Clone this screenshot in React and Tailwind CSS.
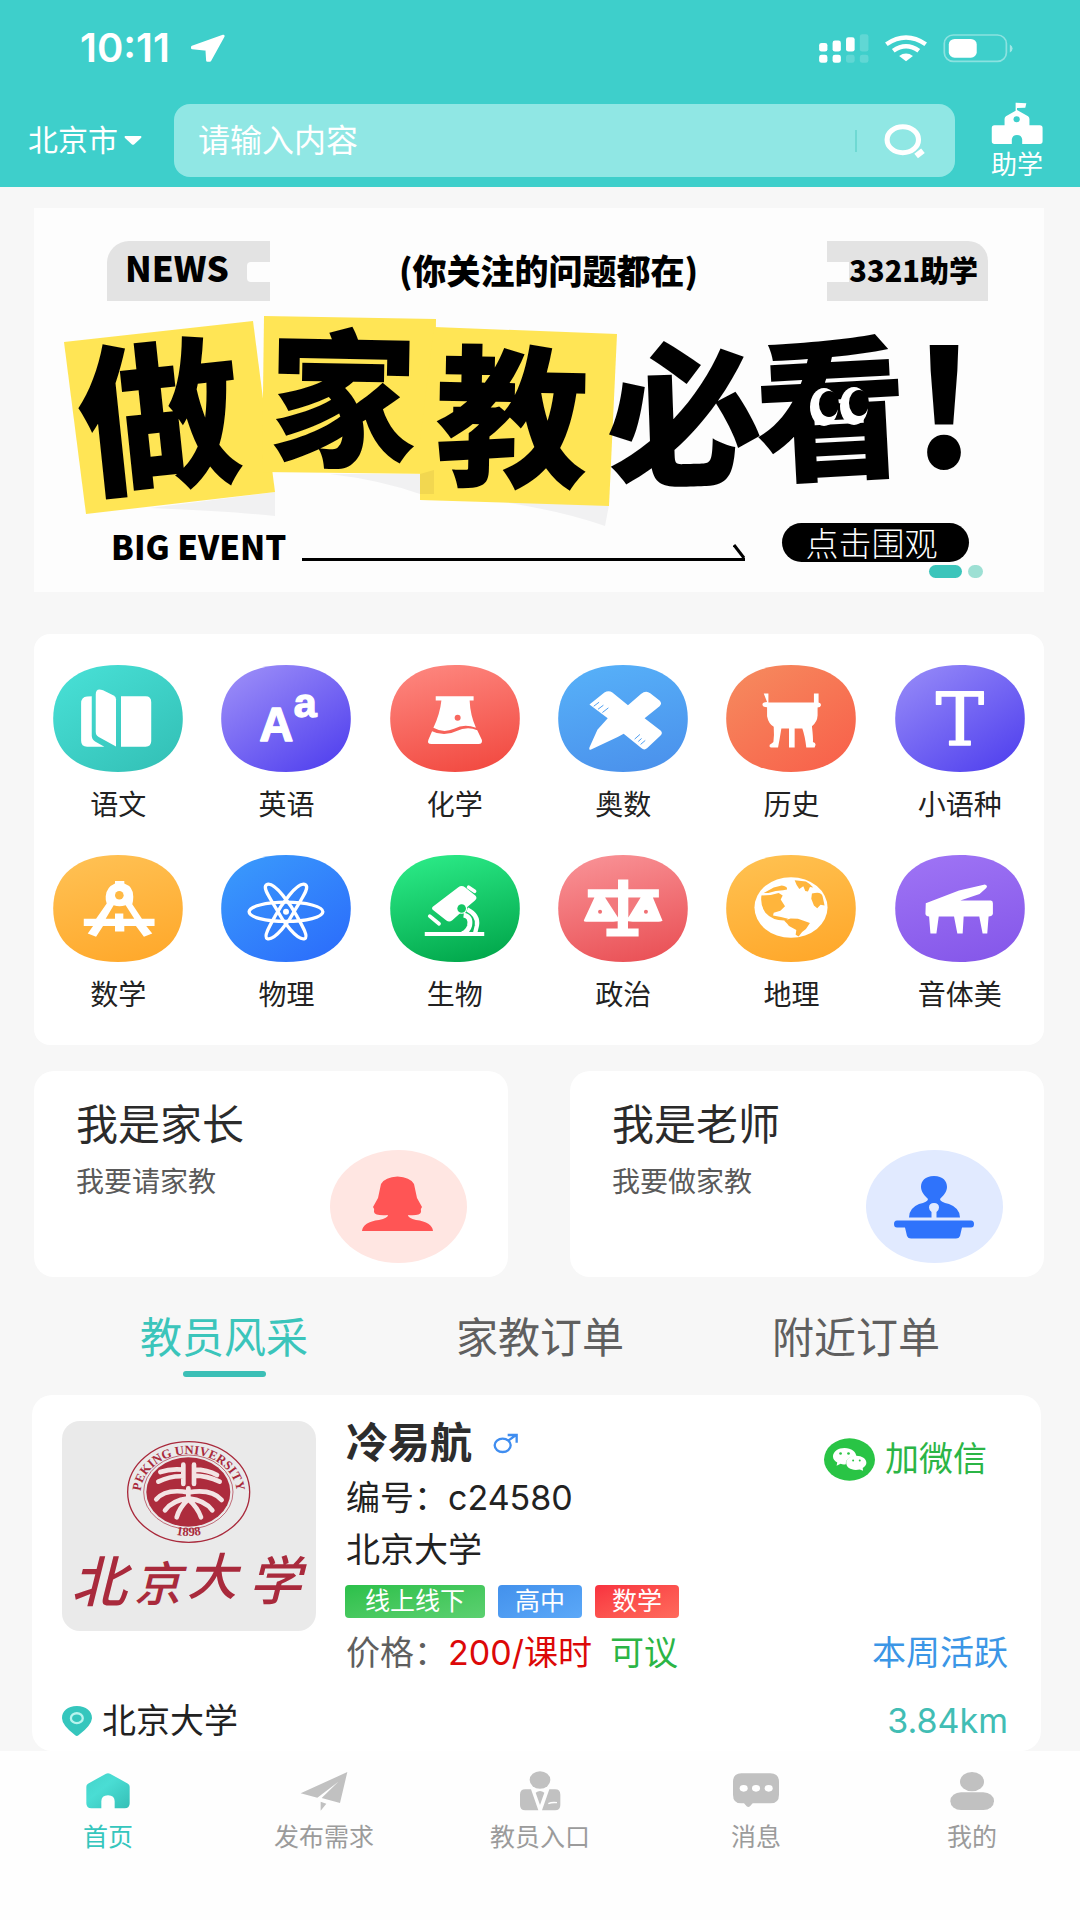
import React from "react";

const BLOB =
  "M195 0C320 0 390 62 390 161C390 260 320 322 195 322C70 322 0 260 0 161C0 62 70 0 195 0Z";

const SUBJECTS = [
  {
    name: "语文", x: 70, y: 74, from: "#48e0d6", to: "#33c0b6", dir: "d",
    art: (
      <g fill="#fff">
        <path d="M186 168v118q0 12 10 18l28 16h-52q-18 0-18-18V190q0-20 18-21z" />
        <path d="M198 163q0-22 22-13l32 16q7 4 7 11v142l-52-28q-9-5-9-15z" />
        <path d="M274 168h74q17 0 17 17v118q0 17-17 17h-74z" />
      </g>
    ),
  },
  {
    name: "英语", x: 576, y: 74, from: "#9d8ff8", to: "#4f3eee", dir: "d",
    art: (
      <g fill="#fff" stroke="#fff" strokeWidth="4" strokeLinejoin="round" fontFamily="Liberation Sans" fontWeight="700">
        <text x="742" y="303" fontSize="142" textAnchor="middle">A</text>
        <text x="829" y="232" fontSize="124" textAnchor="middle">a</text>
      </g>
    ),
  },
  {
    name: "化学", x: 1082, y: 74, from: "#fd847c", to: "#f24b42", dir: "v",
    art: (
      <g fill="#fff">
        <path d="M1219 168h114v13h-12q2 45 19 82q-35-14-66 3q-32 14-62-3q20-42 24-82h-17z" />
        <path d="M1208 273q36 18 72 0q34-16 64-3l14 30q2 12-10 12h-142q-14 0-9-13z" />
        <circle cx="1285" cy="233" r="9" fill="#f8685f" />
      </g>
    ),
  },
  {
    name: "奥数", x: 56, y: 76, from: "#56aff8", to: "#4b92ec", dir: "v",
    art: (
      <g>
        <path fill="#fff" d="M150 195l45-36q13-8 24 0l47 38l39-34q15-12 28-2l28 22q9 9 0 17l-45 36l48 37q8 7 0 15l-40 38q-9 8-18 0l-53-43l-18 10l-80 37q-8 3-5-6l24-53l31-35z" />
        <path stroke="#4f9ff0" strokeWidth="3" fill="none" d="M163 200l16-12M176 209l16-12M189 219l18-14M286 299l16-14M297 306l10-9M304 315l14-12" />
      </g>
    ),
  },
  {
    name: "历史", x: 560, y: 76, from: "#f68a5e", to: "#f8604a", dir: "d",
    art: (
      <path fill="#fff" d="M673 162h14v27h137v-27h14v27q8 2 7 9q-1 6-10 6v24q-1 20-17 32q4 35 3 48q8 2 8 8l-3 8h-25q-4-35-12-57h-23v57h-17v-57h-23q-5 32-10 57h-22q-6-2-3-8q8-4 11-8q3-20 1-46q-16-10-20-32v-27q-14 0-14-8q0-7 14-8z" />
    ),
  },
  {
    name: "小语种", x: 1066, y: 76, from: "#968af8", to: "#4f3fee", dir: "d",
    art: (
      <text x="1261" y="317" fill="#fff" stroke="#fff" strokeWidth="4" strokeLinejoin="round" fontFamily="DejaVu Serif" fontSize="218" textAnchor="middle">T</text>
    ),
  },
  {
    name: "数学", x: 70, y: 642, from: "#ffc052", to: "#ffa92c", dir: "v",
    art: (
      <g>
        <path fill="#fff" d="M256 720h28v8q28 10 27 40q0 12-3 22l29 44h38v22h-25l18 22l-25 10l-24-32h-35v16h-28v-16h-36l-21 32l-25-10l16-22h-28v-22h37l32-46q-4-10-3-22q2-27 28-38z" />
        <circle cx="269" cy="763" r="13" fill="#ffb944" />
        <path fill="#ffb33c" d="M252 793q17 6 36 0l26 41h-33v-16h-25v16h-28z" />
      </g>
    ),
  },
  {
    name: "物理", x: 576, y: 642, from: "#3a9afc", to: "#2b6cfb", dir: "d",
    art: (
      <g fill="none" stroke="#fff" strokeWidth="10">
        <ellipse cx="771" cy="813" rx="111" ry="29" />
        <path d="M712 732C735 716 790 800 805 828C822 858 838 888 828 893C806 903 760 840 743 806C722 770 700 741 712 732Z" />
        <path d="M830 732C807 716 752 800 737 828C720 858 704 888 714 893C736 903 782 840 799 806C820 770 842 741 830 732Z" />
        <circle cx="771" cy="813" r="9" fill="#fff" stroke="none" />
      </g>
    ),
  },
  {
    name: "生物", x: 1082, y: 642, from: "#2ae885", to: "#02a84c", dir: "v",
    art: (
      <g>
        <path fill="#fff" d="M1212 796l75-57q10-7 20 0l32 26q6 8-2 14l-33 28l-35 31q-9 7-18 1l-41-32q-5-6 2-11z" />
        <path stroke="#fff" strokeWidth="11" strokeLinecap="round" d="M1318 739l18 12M1201 826l28 23" />
        <path fill="none" stroke="#fff" strokeWidth="15" d="M1303 823q23 3 18 31q-4 17-22 25" />
        <path fill="none" stroke="#fff" strokeWidth="13" d="M1314 806q34 17 29 48l-6 25" />
        <circle cx="1297" cy="802" r="17" fill="#fff" />
        <circle cx="1297" cy="803" r="13" fill="#14c764" />
        <path fill="#fff" d="M1186 874h179v12h-179z" />
      </g>
    ),
  },
  {
    name: "政治", x: 56, y: 646, from: "#f88f93", to: "#ea5257", dir: "v",
    art: (
      <g>
        <path fill="#fff" d="M236 720h31v29h92v25h-18l29 70q-5 3-12 3h-78l-14-2v22h32v24h-97v-24h34v-22l-13 2h-82q-7 0-7-4l32-69h-20v-25h91z" />
        <path fill="#f2797d" d="M197 774h39v60zM304 774h-37v60z" />
        <circle cx="182" cy="817" r="6" fill="#f07074" />
        <circle cx="320" cy="817" r="6" fill="#f07074" />
      </g>
    ),
  },
  {
    name: "地理", x: 560, y: 646, from: "#ffc04f", to: "#ffa82b", dir: "v",
    art: (
      <g>
        <ellipse cx="755" cy="804" rx="110" ry="91" fill="#fff" />
        <path fill="#ffb53c" d="M666 768l28-2l24-6l12 8l-6 12l13 20l-14 14l-20 6l-2 8q25 4 45 10l-6 5q-40 2-62-23q-16-22-12-52zM673 760l30-16l24-6q18 2 16 12l-12 2l-22 2l-22 6z" />
        <path fill="#ffb53c" d="M766 722l34 4q14 8 22 18l-10-2l-6 14l-8-2l-6-14l-12 8l-8-12zM818 762q28-8 32 8l6 28l-12-2l-10 10l-10-8l-8-20z" />
        <path fill="#ffb038" d="M734 843l20-6l22 1l36 13l-12 18q-16 10-22 22l-9-5l2-14l-22-12l-6-8z" />
      </g>
    ),
  },
  {
    name: "音体美", x: 1066, y: 646, from: "#9d72f4", to: "#8658ea", dir: "v",
    art: (
      <path fill="#fff" d="M1158 791l100-38l78-18q10 4 4 10l-20 18l-58 20h92q6 0 6 8v32q-2 8-13 8l-4 51h-14l-10-51h-47l-3 51h-16l-10-51h-46l-7 51h-18l-4-51q-10 0-11-8z" />
    ),
  },
];

function SubjectIcon({ s, id }) {
  return (
    <svg className="h-[107px] w-[130px]" viewBox={`${s.x} ${s.y} 390 322`} aria-hidden="true">
      <defs>
        <linearGradient id={id} x1={s.dir === "d" ? "0.1" : "0.35"} y1="0" x2={s.dir === "d" ? "0.9" : "0.65"} y2="1">
          <stop offset="0" stopColor={s.from} />
          <stop offset="1" stopColor={s.to} />
        </linearGradient>
      </defs>
      <path d={BLOB} transform={`translate(${s.x} ${s.y})`} fill={`url(#${id})`} />
      {s.art}
    </svg>
  );
}

function StatusBar() {
  return (
    <div className="flex h-24 items-center justify-between pr-[65px] pl-20">
      <div className="flex items-center gap-5">
        <span className="text-[40px] leading-10 font-semibold">10:11</span>
        <svg className="h-[30px] w-9" viewBox="555 100 105 90" preserveAspectRatio="none" aria-hidden="true">
          <path fill="#fff" stroke="#fff" strokeWidth="8" strokeLinejoin="round" d="M562 142L652 109L613 182L606 182L604 149L562 145Z" />
        </svg>
      </div>
      <svg className="h-[33px] w-[200px]" viewBox="800 95 580 100" preserveAspectRatio="none" aria-hidden="true">
        <g fill="#fff">
          <rect x="812" y="128" width="24" height="26" rx="7" />
          <rect x="851" y="121" width="24" height="33" rx="7" />
          <rect x="890" y="111" width="25" height="43" rx="7" />
          <rect x="812" y="164" width="24" height="24" rx="7" />
          <rect x="851" y="164" width="24" height="24" rx="7" />
          <rect x="930" y="102" width="25" height="52" rx="7" opacity=".18" />
          <rect x="890" y="164" width="25" height="24" rx="7" opacity=".18" />
          <rect x="930" y="164" width="25" height="24" rx="7" opacity=".18" />
          <path d="M1044 168q20-15 40 0l-20 16z" />
        </g>
        <g fill="none" stroke="#fff" strokeWidth="13">
          <path d="M1007 132q57-41 114 0" />
          <path d="M1027 152q37-28 74 0" />
        </g>
        <rect x="1175" y="104" width="180" height="80" rx="26" fill="none" stroke="#fff" strokeOpacity=".4" strokeWidth="5" />
        <rect x="1188" y="116" width="81" height="57" rx="17" fill="#fff" />
        <path d="M1365 133q8 4 8 12t-8 12z" fill="#fff" opacity=".5" />
      </svg>
    </div>
  );
}

function Header() {
  return (
    <header className="bg-[#3ecfcb] text-white">
      <StatusBar />
      <div className="flex h-[91px] items-start pr-[35px] pl-7">
        <button type="button" className="mt-6 flex items-center gap-[6px] text-[30px] leading-10" aria-haspopup="listbox">
          北京市
          <svg className="h-[9px] w-[18px]" viewBox="0 0 18 9" aria-hidden="true">
            <path fill="#fff" d="M1 0h16q1 1 0 2L10 8.500q-1 .5-2 0L1 2q-1-1 0-2z" />
          </svg>
        </button>
        <form className="mt-2 ml-8 flex h-[73px] flex-1 items-center rounded-2xl bg-[#90e7e4] pr-[30px] pl-6" role="search" onSubmit={(e) => e.preventDefault()}>
          <input type="search" aria-label="搜索" placeholder="请输入内容" className="min-w-0 flex-1 bg-transparent text-[32px] leading-10 text-white outline-none placeholder:text-white placeholder:opacity-100" />
          <span className="mr-[26px] h-[22px] w-[2px] bg-[#6fd9d3]" />
          <button type="submit" aria-label="搜索">
            <svg className="h-9 w-[42px]" viewBox="995 368 123 108" preserveAspectRatio="none" aria-hidden="true">
              <ellipse cx="1053" cy="418" rx="46" ry="39" fill="none" stroke="#fff" strokeWidth="15" />
              <path stroke="#fff" strokeWidth="17" d="M1092 467l20-16" />
            </svg>
          </button>
        </form>
        <button type="button" className="mt-1 ml-[34px] flex flex-col items-center gap-1 text-[26px] leading-8">
          <svg className="h-[45px] w-14" viewBox="1305 300 162 135" preserveAspectRatio="none" aria-hidden="true">
            <path fill="#fff" d="M1382 308l31 2l-3 13l-24 1v6l32 19q4 3 4 8v19h30q8 0 8 8v40q0 8-8 8h-51v-14q-2-13-15-13t-15 13v14h-50q-8 0-8-8v-40q0-8 8-8h29v-19q0-5 4-8l28-17z" />
            <circle cx="1385" cy="358" r="9" fill="#3ecfcb" />
          </svg>
          助学
        </button>
      </div>
    </header>
  );
}

function Banner() {
  return (
    <section className="mt-[21px] mr-9 ml-[34px] flex flex-col bg-[#fdfdfd] pt-[33px] pb-[14px] font-['Noto_Sans_CJK_SC',sans-serif] text-black" aria-label="做家教必看">
      <div className="flex items-start justify-between pr-14 pl-[73px] font-black">
        <div className="relative h-[60px] w-[163px] rounded-tl-[22px] bg-[#e3e3e3] pl-[18px] text-[35px] leading-[52px]">
          NEWS
          <span className="absolute top-[21px] right-0 h-5 w-[23px] rounded-l bg-[#fdfdfd]" />
        </div>
        <p className="text-[34px] leading-[58px]">(你关注的问题都在)</p>
        <div className="relative h-[60px] w-[161px] rounded-tr-[20px] bg-[#e3e3e3] pr-[10px] text-right text-[29px] leading-[56px]">
          <span className="absolute top-[21px] left-0 h-5 w-[22px] bg-[#fdfdfd]" />
          <span className="relative">3321助学</span>
        </div>
      </div>
      <svg className="mt-[7px] w-full" viewBox="34 308 1010 215" overflow="visible" role="img" aria-label="做家教必看！">
        <g fill="#f1f1f2">
          <path d="M150 508L275 492V516Q240 512 150 508Z" />
          <path d="M330 474H420V494Q380 480 330 474Z" />
          <path d="M490 500L609 505L605 526Q560 510 490 500Z" />
        </g>
        <g fill="#ffe555">
          <path d="M64 342L253 321L275 492L86 514Z" />
          <path d="M264 316L436 319L434 474L262 472Z" />
          <path d="M434 327L617 334L609 506L420 500V440Z" />
        </g>
        <path d="M420 474L434 470V494H420Z" fill="#f2d750" />
        <g fontFamily="Noto Sans CJK SC" fontWeight="900" textAnchor="middle" fill="#000">
          <text x="160" y="478" fontSize="163" transform="rotate(-6 160 418)">做</text>
          <text x="343" y="455" fontSize="148" transform="rotate(1 343 399)">家</text>
          <text x="512" y="475" fontSize="153" transform="rotate(1 512 418)">教</text>
          <text x="684" y="474" fontSize="156" transform="rotate(-2 684 416)">必</text>
          <text x="831" y="467" fontSize="153" transform="rotate(-3 831 409)">看</text>
          <text x="944" y="468" fontSize="160">!</text>
        </g>
        <ellipse cx="824" cy="407" rx="14" ry="19" fill="#fff" />
        <ellipse cx="829" cy="404" rx="10" ry="13" fill="#000" />
        <ellipse cx="854" cy="406" rx="14" ry="19" fill="#fff" />
        <ellipse cx="859" cy="403" rx="10" ry="13" fill="#000" />
      </svg>
      <div className="flex h-[39px] items-center pr-[75px] pl-[77px]">
        <span className="pt-2 text-[33px] leading-[39px] font-extrabold">BIG EVENT</span>
        <div className="mt-[18px] mr-[37px] ml-4 flex h-[18px] flex-1 items-end justify-end border-b-[3px] border-black">
          <svg className="h-[14px] w-3" viewBox="0 0 12 14" aria-hidden="true">
            <path d="M1 1l10 13" stroke="#000" strokeWidth="3" />
          </svg>
        </div>
        <button type="button" className="h-[39px] w-[187px] rounded-full bg-black pr-2 text-center text-[33px] leading-[37px] font-light text-white">点击围观</button>
      </div>
      <div className="mt-[3px] flex justify-end gap-[6px] pr-[61px]">
        <span className="h-[13px] w-[33px] rounded-full bg-[#3bc5bb]" />
        <span className="h-[13px] w-[15px] rounded-full bg-[#9de0d4]" />
      </div>
    </section>
  );
}

function RoleCard({ title, sub, children }) {
  return (
    <a href="#role" className="relative block h-[206px] rounded-[20px] bg-white px-[42px] pt-[30px]">
      <h2 className="text-[42px] leading-[48px] text-[#2b2b2b]">{title}</h2>
      <p className="mt-[15px] text-[28px] leading-9 text-[#5a5a5a]">{sub}</p>
      <div className="absolute right-[41px] bottom-[14px]">{children}</div>
    </a>
  );
}

function Roles() {
  return (
    <section className="mt-[26px] mr-9 ml-[34px] grid grid-cols-2 gap-[62px]">
      <RoleCard title="我是家长" sub="我要请家教">
        <svg className="h-[113px] w-[137px]" viewBox="331 1149 137 113" aria-hidden="true">
          <ellipse cx="399.500" cy="1205.500" rx="68.500" ry="56.500" fill="#ffe6e2" />
          <path fill="#ff5555" d="M398.500 1175.500Q411 1176 415 1183L418 1197L423 1206Q421 1208 422 1211Q421 1215 409 1214Q409 1217 417 1219Q433 1221 434 1230H363Q364 1221 380 1219Q389 1217 389 1214Q376 1215 375 1211Q376 1208 374 1206L379 1197L382 1183Q386 1176 398.500 1175.500Z" />
        </svg>
      </RoleCard>
      <RoleCard title="我是老师" sub="我要做家教">
        <svg className="h-[113px] w-[137px]" viewBox="866 1149 137 113" aria-hidden="true">
          <ellipse cx="934.500" cy="1205.500" rx="68.500" ry="56.500" fill="#e1eaff" />
          <path fill="#2f73fb" d="M934 1175C943 1175 947 1180 947 1186C947 1191 943 1195 940 1198Q940 1201 949 1203Q960 1207 960 1216.500H909Q909 1207 919 1203Q928 1201 928 1198C925 1195 921 1191 921 1186C921 1180 925 1175 934 1175Z" />
          <path fill="#2f73fb" d="M897 1219.500H971Q974 1219.500 974 1223T971 1226.500H962L960 1235Q959 1237.500 956 1237.500H911Q908 1237.500 907 1235L905 1226.500H897Q894 1226.500 894 1223T897 1219.500Z" />
          <path fill="#e1eaff" d="M934 1202Q939 1202 939 1206.500Q939 1209 936.500 1211V1217H931.500V1211Q929 1209 929 1206.500Q929 1202 934 1202Z" />
        </svg>
      </RoleCard>
    </section>
  );
}

function Tabs() {
  return (
    <div className="grid h-[118px] grid-cols-3 px-[66px] text-[42px] text-[#5f5f5f]" role="tablist">
      {["教员风采", "家教订单", "附近订单"].map((t, i) => (
        <button key={t} type="button" role="tab" aria-selected={i === 0} className={i === 0 ? "flex flex-col items-center pt-9 leading-[50px] text-[#3bc5bb]" : "flex flex-col items-center pt-9 leading-[50px]"}>
          {t}
          {i === 0 && <span className="mt-2 h-[6px] w-[83px] rounded-full bg-[#3bbfb6]" />}
        </button>
      ))}
    </div>
  );
}

function SchoolLogo() {
  return (
    <svg className="h-[210px] w-[254px] shrink-0 rounded-[18px] bg-[#eaeaea]" viewBox="95 90 762 630" role="img" aria-label="北京大学">
      <defs>
        <path id="ring-top" d="M341 352A144 119 0 1 1 609 352" />
        <path id="ring-bottom" d="M370 400A157 137 0 0 0 580 400" />
      </defs>
      <g fill="none" stroke="#a92a3c">
        <ellipse cx="475" cy="303" rx="183" ry="151" strokeWidth="4" />
        <ellipse cx="474" cy="303" rx="134" ry="111" strokeWidth="2" />
      </g>
      <ellipse cx="474" cy="303" rx="126" ry="104" fill="#ad2c3d" />
      <g fill="#a92a3c" fontFamily="Liberation Serif" fontWeight="700" fontSize="38" textAnchor="middle">
        <text>
          <textPath href="#ring-top" startOffset="50%">PEKING UNIVERSITY</textPath>
        </text>
        <text>
          <textPath href="#ring-bottom" startOffset="50%">1898</textPath>
        </text>
      </g>
      <g fill="none" stroke="#f3e4e4" strokeWidth="14" strokeLinecap="round" strokeLinejoin="round">
        <path d="M459 221V279M390 243Q420 232 459 236M384 272Q420 254 459 256" />
        <path d="M491 221V279M491 236Q532 236 560 252M491 254Q530 254 568 272" />
        <path d="M474 292V322M378 325Q405 292 474 304Q545 292 574 327" />
        <path d="M404 358Q425 328 474 322Q525 328 546 358M439 379Q447 350 474 325Q502 350 512 379" />
      </g>
      <g fill="#a92a3c" fontFamily="Noto Sans CJK SC" fontWeight="500" fontStyle="italic" textAnchor="middle">
        <text x="206" y="632" fontSize="166">北</text>
        <text x="382" y="630" fontSize="142">京</text>
        <text x="545" y="612" fontSize="150">大</text>
        <text x="734" y="626" fontSize="158">学</text>
      </g>
    </svg>
  );
}

function TeacherCard() {
  return (
    <article className="mr-[39px] ml-8 rounded-[20px] bg-white pt-[26px] pr-[33px] pb-2 pl-[30px] text-[34px] leading-[44px] text-[#222]">
      <div className="flex">
        <SchoolLogo />
        <div className="ml-[30px] flex-1">
          <h3 className="flex items-center text-[42px] font-bold text-[#2d2d2d]">
            冷易航
            <svg className="ml-[21px] h-[21px] w-[26px]" viewBox="1392 124 78 63" role="img" aria-label="男">
              <g fill="none" stroke="#3f8df0" strokeWidth="7">
                <ellipse cx="1421" cy="161" rx="24" ry="20" />
                <path d="M1438 147L1461 130M1436 130H1463V153" />
              </g>
            </svg>
          </h3>
          <p className="mt-[11px]">编号：c24580</p>
          <p className="mt-2">北京大学</p>
          <ul className="mt-[13px] -ml-px flex gap-[13px] text-[25px] leading-[33px] text-white">
            <li className="rounded bg-linear-to-br from-[#2bc04a] to-[#5bd070] px-5">线上线下</li>
            <li className="rounded bg-linear-to-br from-[#4391ec] to-[#5ba8f8] px-[17px]">高中</li>
            <li className="rounded bg-linear-to-br from-[#f8313f] to-[#ff6a5c] px-[17px]">数学</li>
          </ul>
          <p className="mt-[13px]">
            <span className="text-[#5f5f5f]">价格：</span>
            <span className="text-[#dc0808]">200/课时</span>
            <span className="ml-[18px] text-[#2bb546]">可议</span>
          </p>
        </div>
        <div className="flex flex-col items-end justify-between">
          <button type="button" className="mt-4 mr-[21px] flex items-center gap-[10px] text-[#2bb546]">
            <svg className="h-[43px] w-[51px]" viewBox="849 138 154 130" aria-hidden="true">
              <ellipse cx="926" cy="203" rx="77" ry="64" fill="#29c445" />
              <path fill="#fff" d="M911 168C932 168 946 180 947 194C928 192 914 202 915 217Q907 219 899 216L887 222L889 212Q876 205 876 193C877 178 892 168 911 168Z" />
              <path fill="#fff" d="M946 192C964 192 977 201 977 213Q977 222 966 229L967 237L957 233C935 238 916 229 916 213C916 201 929 192 946 192Z" />
              <g fill="#29c445">
                <circle cx="899" cy="185" r="4" />
                <circle cx="923" cy="185" r="4" />
                <circle cx="937" cy="206" r="3" />
                <circle cx="957" cy="206" r="3" />
              </g>
            </svg>
            加微信
          </button>
          <span className="text-[#3b96e6]">本周活跃</span>
        </div>
      </div>
      <div className="mt-6 flex items-center">
        <svg className="h-[30px] w-[30px]" viewBox="95 942 91 91" aria-hidden="true">
          <path fill="#35c6bd" d="M140 942C168 942 186 957 186 979Q185 1000 145 1031Q140 1035 135 1031Q95 1000 95 979C95 957 112 942 140 942Z" />
          <ellipse cx="140" cy="979" rx="18" ry="15" fill="none" stroke="#b8f4ee" strokeWidth="7" />
        </svg>
        <span className="ml-[10px]">北京大学</span>
        <span className="ml-auto text-[#41bdb4]">3.84km</span>
      </div>
    </article>
  );
}

const NAV = [
  {
    label: "首页", box: "61 26 150 126",
    art: <path fill="url(#home-fill)" d="M130 37Q136 34 142 37L196 67Q201 70 201 76V126Q201 141 186 141H156V120Q156 102 136 102T116 120V141H86Q71 141 71 126V76Q71 70 76 67Z" />,
  },
  {
    label: "发布需求", box: "710 26 150 126",
    art: <path d="M855 32L833 125L778 110L828 61L765 109L715 96ZM775 121L792 127L775 148Z" />,
  },
  {
    label: "教员入口", box: "42 26 150 126",
    art: (
      <g>
        <ellipse cx="117" cy="56" rx="31" ry="26" />
        <path d="M73 84H90L112 147H73Q57 147 57 131V100Q57 84 73 84ZM145 84H162Q178 84 178 100V131Q178 147 162 147H123ZM104 94Q117 84 130 94L117 131Z" />
        <path d="M142 127Q152 122 168 124" stroke="#fff" strokeWidth="4" fill="none" />
      </g>
    ),
  },
  {
    label: "消息", box: "691 26 150 126",
    art: (
      <g>
        <path d="M722 36H809Q835 36 835 62V100Q835 126 809 126H756L748 135Q743 139 738 135L730 126H722Q697 126 697 100V62Q697 36 722 36Z" />
        <g fill="#fff">
          <ellipse cx="729" cy="81" rx="12" ry="10" />
          <ellipse cx="766" cy="81" rx="12" ry="10" />
          <ellipse cx="804" cy="81" rx="12" ry="10" />
        </g>
      </g>
    ),
  },
  {
    label: "我的", box: "1344 26 150 126",
    art: (
      <g>
        <ellipse cx="1419" cy="61" rx="36" ry="29" />
        <rect x="1354" y="93" width="131" height="53" rx="32" ry="26" />
      </g>
    ),
  },
];

function BottomNav() {
  return (
    <nav className="grid min-h-[170px] grid-cols-5 bg-[#fefefe] text-[25px] leading-[30px] text-[#9b9b9b]">
      {NAV.map((n, i) => (
        <a key={n.label} href="#nav" aria-current={i === 0 ? "page" : undefined} className={i === 0 ? "flex flex-col items-center pt-[19px] text-[#35c6bd]" : "flex flex-col items-center pt-[19px]"}>
          <svg className="h-[42px] w-[50px]" viewBox={n.box} fill="#c1c1c1" aria-hidden="true">
            {i === 0 && (
              <defs>
                <linearGradient id="home-fill" x1="0" y1="0" x2="1" y2="1">
                  <stop offset="0" stopColor="#43d3ca" />
                  <stop offset=".4" stopColor="#4addd4" />
                  <stop offset="1" stopColor="#35bfb6" />
                </linearGradient>
              </defs>
            )}
            {n.art}
          </svg>
          <span className="mt-[10px]">{n.label}</span>
        </a>
      ))}
    </nav>
  );
}

export default function App() {
  return (
    <div className="flex min-h-screen flex-col bg-[#f7f7f7] font-[Inter,'Noto_Sans_CJK_SC',sans-serif]">
      <Header />
      <main className="flex-1">
        <Banner />
        <section className="mt-[42px] mr-9 ml-[34px] grid grid-cols-6 gap-y-8 rounded-2xl bg-white pt-[31px] pb-8 text-[28px] leading-9 text-[#222]">
          {SUBJECTS.map((s, i) => (
            <a key={s.name} href="#subject" className="flex flex-col items-center gap-[15px]">
              <SubjectIcon s={s} id={`subject-${i}`} />
              {s.name}
            </a>
          ))}
        </section>
        <Roles />
        <Tabs />
        <TeacherCard />
      </main>
      <BottomNav />
    </div>
  );
}
